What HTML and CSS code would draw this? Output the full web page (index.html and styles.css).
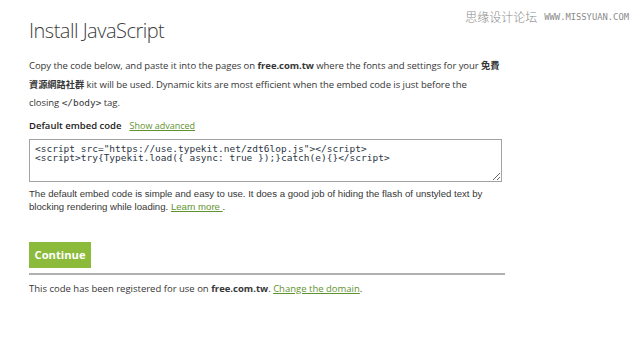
FILE: index.html
```html
<!DOCTYPE html>
<html lang="en">
<head>
    <meta charset="UTF-8">
    <meta name="viewport" content="width=device-width, initial-scale=1.0">
    <title>Install JavaScript</title>
    <link rel="stylesheet" href="styles.css">
</head>
<body>
    <div class="watermark">
        <span class="watermark-cn">思缘设计论坛</span>
        <span class="watermark-en">WWW.MISSYUAN.COM</span>
    </div>

    <div class="container">
        <h1>Install JavaScript</h1>

        <p class="intro">
            Copy the code below, and paste it into the pages on <strong>free.com.tw</strong> where the fonts and settings for your <strong class="cjk">免費資源網路社群</strong> kit will be used. Dynamic kits are most efficient when the embed code is just before the closing&nbsp;<code>&lt;/body&gt;</code> tag.
        </p>

        <div class="embed-header">
            <span class="embed-label">Default embed code</span>
            <a href="#" class="link small">Show advanced</a>
        </div>

        <textarea class="embed-code" rows="3" readonly>&lt;script src="https://use.typekit.net/zdt6lop.js"&gt;&lt;/script&gt;
&lt;script&gt;try{Typekit.load({ async: true });}catch(e){}&lt;/script&gt;</textarea>

        <p class="note">
            The default embed code is simple and easy to use. It does a good job of hiding the flash of unstyled text by blocking rendering while loading. <a href="#" class="link">Learn more </a>.
        </p>

        <button class="continue-btn">Continue</button>

        <p class="registered">
            This code has been registered for use on <strong>free.com.tw</strong>. <a href="#" class="link">Change the domain</a>.
        </p>
    </div>
</body>
</html>
```

FILE: styles.css
```css
:root {
    --text: #363636;
    --green: #8cba3a;
    --link-green: #5f9330;
    --border: #a3a3a3;
}

body {
    margin: 0;
    background-color: #ffffff;
    color: var(--text);
    font-family: "Open Sans", "Noto Sans CJK TC", sans-serif;
    position: relative;
}

.watermark {
    position: absolute;
    top: 8px;
    right: 11px;
    display: flex;
    align-items: center;
    gap: 7px;
    color: #8a8a8a;
}

.watermark-cn {
    font-family: "Noto Sans CJK SC", sans-serif;
    font-size: 12px;
    font-weight: 300;
}

.watermark-en {
    font-family: "DejaVu Sans Mono", monospace;
    font-size: 8.8px;
}

.container {
    width: 476px;
    padding: 18px 0 0 29px;
}

h1 {
    margin: 0 0 11.5px;
    font-size: 20px;
    line-height: 26px;
    font-weight: 300;
    letter-spacing: -0.5px;
    color: #3c3c3c;
}

.intro {
    margin: 0;
    font-size: 9.5px;
    line-height: 18px;
    letter-spacing: -0.05px;
}

.intro strong {
    font-weight: 700;
}

.intro .cjk {
    font-family: "Noto Sans CJK TC", sans-serif;
    font-size: 9.2px;
    letter-spacing: 0;
}

.intro code {
    font-family: "DejaVu Sans Mono", monospace;
    font-size: 9.5px;
}

.embed-header {
    display: flex;
    gap: 8px;
    align-items: baseline;
    margin: 7.5px 0 5.5px;
    font-size: 9.5px;
    line-height: 14px;
}

.embed-label {
    font-weight: 600;
    color: #222222;
}

.link {
    color: var(--link-green);
    text-decoration: underline;
}

.link.small {
    font-size: 9px;
}

.embed-code {
    display: block;
    box-sizing: border-box;
    width: 473px;
    height: 43px;
    margin: 0;
    padding: 4px 5px;
    border: 1px solid var(--border);
    border-radius: 0;
    font-family: "DejaVu Sans Mono", monospace;
    font-size: 9.5px;
    line-height: 9px;
    color: #2b3644;
    resize: both;
    overflow: hidden;
}

.note {
    margin: 5px 0 0;
    font-family: "Liberation Sans", Arial, sans-serif;
    font-size: 9.6px;
    line-height: 13px;
}

.continue-btn {
    display: block;
    margin-top: 29px;
    height: 26px;
    padding: 0 5.5px;
    border: none;
    border-radius: 0;
    background-color: var(--green);
    color: #ffffff;
    font-family: "Open Sans", sans-serif;
    font-size: 11.2px;
    font-weight: 700;
    cursor: pointer;
}

.registered {
    margin: 5.5px 0 0;
    padding-top: 7px;
    border-top: 2px solid #b0b0b0;
    font-size: 9.5px;
    line-height: 14px;
}
```
